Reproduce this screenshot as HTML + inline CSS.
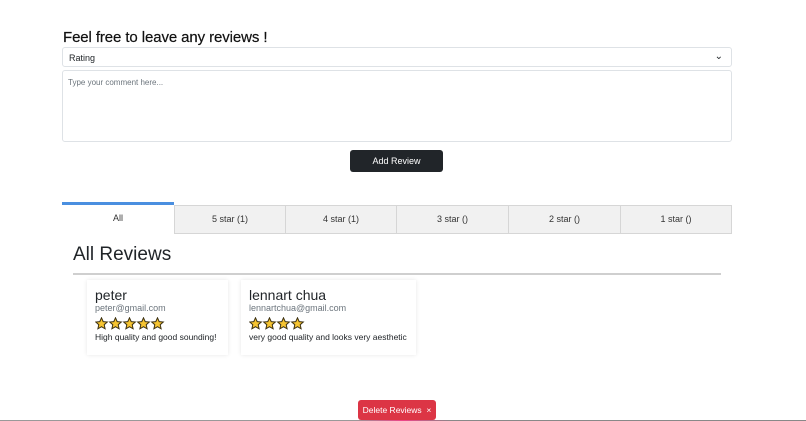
<!DOCTYPE html>
<html><head><meta charset="utf-8"><style>
*{box-sizing:border-box;margin:0;padding:0}
body{width:806px;height:421px;background:#fff;font-family:"Liberation Sans",sans-serif;color:#212529;position:relative;overflow:hidden}
.abs{position:absolute}
h3{position:absolute;left:63px;top:29px;font-size:15px;font-weight:400;color:#111;letter-spacing:-0.1px;-webkit-text-stroke:0.2px #111}
.sel{left:62px;top:47px;width:670px;height:20px;border:1px solid #dee2e6;border-radius:3px;font-size:9px;padding:5px 6px;color:#212529}
.ta{left:62px;top:70px;width:670px;height:72px;border:1px solid #dee2e6;border-radius:3px;font-size:8px;padding:7px 5px;color:#6c757d}
.btn{left:350px;top:150px;width:93px;height:22px;background:#212529;border-radius:3px;color:#fff;font-size:9px;text-align:center;line-height:22px}
.tab{top:205px;height:29px;background:#f1f1f1;border:1px solid #d6d6d6;border-left:none;font-size:9px;text-align:center;line-height:27px;color:#333}
.tab.a{background:#fff;border:none;border-top:3px solid #4a8fe0;top:202px;height:31px}
.tab.f{border-left:1px solid #d6d6d6}
h2{position:absolute;left:73px;top:244px;font-size:19px;font-weight:400}
.hr{left:73px;top:273px;width:648px;height:2px;background:#cfcfcf}
.card{top:280px;height:75px;box-shadow:0 0 4px rgba(0,0,0,.1);padding:7px 8px}
.n{font-size:14px;color:#212529;line-height:16px}
.e{font-size:9px;color:#6c757d;margin-top:0px;line-height:11px}
.s{margin-top:3px;height:14px}
.t{font-size:8.5px;margin-top:1px;color:#212529}
.del{left:358px;top:400px;width:78px;height:20px;background:#dc3545;border-radius:3px;color:#fff;font-size:8.5px;line-height:20px;text-align:center}
.bl{left:0;top:420px;width:806px;height:1px;background:linear-gradient(90deg,#999,#999 44%,#e48 50%,#888 56%,#888)}
</style></head><body>
<svg width="0" height="0" style="position:absolute"><defs><path id="st" d="M6.5 0.8L8.2 4.6 12.3 5 9.2 7.7 10.1 11.8 6.5 9.7 2.9 11.8 3.8 7.7 0.7 5 4.8 4.6Z" fill="#f7c531" stroke="#3a2f10" stroke-width="1"/></defs></svg>
<h3>Feel free to leave any reviews !</h3>
<div class="abs sel">Rating<span style="position:absolute;right:8px;top:3px;font-size:10px">&#8964;</span></div>
<div class="abs ta">Type your comment here...</div>
<div class="abs btn">Add Review</div>
<div class="abs tab a" style="left:62px;width:112px">All</div>
<div class="abs tab f" style="left:174px;width:112px">5 star (1)</div>
<div class="abs tab" style="left:286px;width:111px">4 star (1)</div>
<div class="abs tab" style="left:397px;width:112px">3 star ()</div>
<div class="abs tab" style="left:509px;width:112px">2 star ()</div>
<div class="abs tab" style="left:621px;width:111px">1 star ()</div>
<h2>All Reviews</h2>
<div class="abs hr"></div>
<div class="abs card" style="left:87px;width:141px">
<div class="n">peter</div><div class="e">peter@gmail.com</div>
<div class="s"><svg width="75" height="14"><use href="#st" x="0"/><use href="#st" x="14"/><use href="#st" x="28"/><use href="#st" x="42"/><use href="#st" x="56"/></svg></div>
<div class="t">High quality and good sounding!</div></div>
<div class="abs card" style="left:241px;width:175px">
<div class="n">lennart chua</div><div class="e">lennartchua@gmail.com</div>
<div class="s"><svg width="75" height="14"><use href="#st" x="0"/><use href="#st" x="14"/><use href="#st" x="28"/><use href="#st" x="42"/></svg></div>
<div class="t">very good quality and looks very aesthetic</div></div>
<div class="abs del">Delete Reviews &nbsp;×</div>
<div class="abs bl"></div>
</body></html>
